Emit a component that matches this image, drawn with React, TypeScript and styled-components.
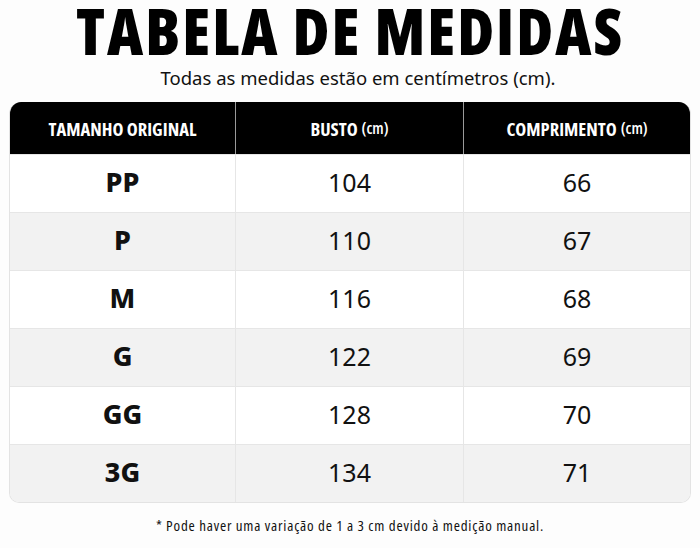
import React from "react";
import styled, { createGlobalStyle } from "styled-components";

const Global = createGlobalStyle`
  html, body { margin: 0; padding: 0; background: #fdfdfd; }
  body { font-family: "Noto Sans", "Liberation Sans", sans-serif; color: #111; }
`;

const Page = styled.div`
  width: 700px;
  height: 548px;
  display: flex;
  flex-direction: column;
  align-items: center;
  box-sizing: border-box;
`;

const Title = styled.h1`
  margin: 0;
  font-family: "Open Sans", "Noto Sans", sans-serif;
  font-weight: 800;
  font-stretch: condensed;
  font-size: 63px;
  line-height: 62px;
  letter-spacing: 2px;
  color: #000;
`;

const Subtitle = styled.p`
  margin: 3px 0 0 16px;
  font-size: 18.5px;
  line-height: 26px;
  color: #111;
`;

const Table = styled.div`
  margin-top: 11px;
  width: 680px;
  display: grid;
  grid-template-columns: 225px 228px 1fr;
  border: 1px solid #e3e3e3;
  border-top: none;
  border-radius: 12px 12px 10px 10px;
  overflow: hidden;
`;

const HeadCell = styled.div<{ $first?: boolean }>`
  height: 52px;
  background: #000;
  color: #fff;
  display: flex;
  align-items: center;
  justify-content: center;
  font-family: "Open Sans", "Noto Sans", sans-serif;
  font-stretch: condensed;
  font-weight: 700;
  font-size: 18.5px;
  border-left: ${(p) => (p.$first ? "none" : "1px solid #9a9a9a")};
`;

const Unit = styled.span`
  font-size: 16px;
  font-weight: 600;
  margin-left: 4px;
`;

const Cell = styled.div<{ $alt: boolean; $first?: boolean; $size?: boolean }>`
  height: 58px;
  box-sizing: border-box;
  background: ${(p) => (p.$alt ? "#f2f2f2" : "#ffffff")};
  border-left: ${(p) => (p.$first ? "none" : "1px solid #e6e6e6")};
  border-top: 1px solid #e6e6e6;
  display: flex;
  align-items: center;
  justify-content: center;
  padding-bottom: 4px;
  font-size: ${(p) => (p.$size ? "27px" : "25px")};
  font-weight: ${(p) => (p.$size ? 800 : 400)};
  color: #111;
`;

const Note = styled.p`
  margin: 12px 0 0;
  font-family: "Open Sans", "Noto Sans", sans-serif;
  font-stretch: condensed;
  font-size: 15px;
  letter-spacing: 0.8px;
  color: #111;
`;

const rows = [
  ["PP", "104", "66"],
  ["P", "110", "67"],
  ["M", "116", "68"],
  ["G", "122", "69"],
  ["GG", "128", "70"],
  ["3G", "134", "71"],
];

export default function App() {
  return (
    <Page>
      <Global />
      <Title>TABELA DE MEDIDAS</Title>
      <Subtitle>Todas as medidas estão em centímetros (cm).</Subtitle>
      <Table>
        <HeadCell $first>TAMANHO ORIGINAL</HeadCell>
        <HeadCell>
          BUSTO<Unit>(cm)</Unit>
        </HeadCell>
        <HeadCell>
          COMPRIMENTO<Unit>(cm)</Unit>
        </HeadCell>
        {rows.map((r, i) =>
          r.map((v, j) => (
            <Cell key={`${i}-${j}`} $alt={i % 2 === 1} $first={j === 0} $size={j === 0}>
              {v}
            </Cell>
          ))
        )}
      </Table>
      <Note>* Pode haver uma variação de 1 a 3 cm devido à medição manual.</Note>
    </Page>
  );
}
